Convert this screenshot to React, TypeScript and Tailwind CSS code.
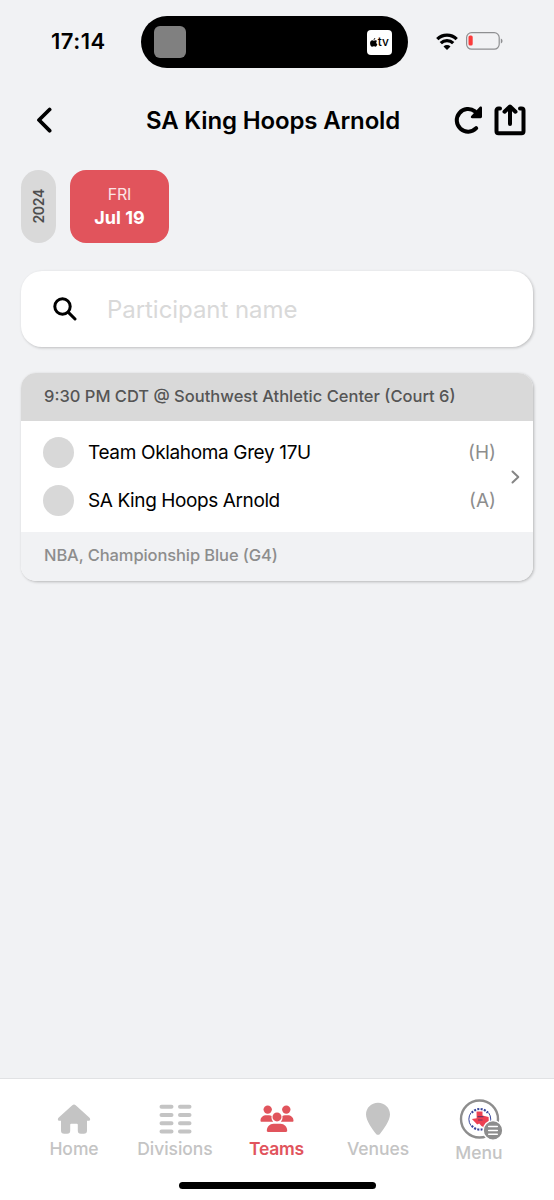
import React from 'react';
import clsx from 'clsx';

interface Team {
  name: string;
  side: string;
  tracking: string;
}

interface TabItem {
  label: string;
  icon: React.ReactNode;
  width: string;
  active?: boolean;
}

const teams: Team[] = [
  { name: 'Team Oklahoma Grey 17U', side: '(H)', tracking: 'tracking-[-0.35px]' },
  { name: 'SA King Hoops Arnold', side: '(A)', tracking: 'tracking-[-0.4px]' },
];

const AppleGlyph = () => (
  <svg viewBox="0 0 14 17" className="h-[9px] w-[7.5px]" fill="#000">
    <path d="M9.900 0c.1 1.900-1.400 3.700-3.200 3.700C6.500 1.900 8.200.2 9.900 0ZM13.200 5.700c-2.400 1.500-2 4.900.6 6-.6 1.900-2.100 4.800-3.800 4.800-1.200 0-1.600-.7-3-.7s-1.900.7-3 .7C1.700 16.500-.2 12.200.1 9 .3 5.900 2.200 4.300 4.100 4.300c1.200 0 2.200.8 3 .8.700 0 2-.9 3.500-.9 1 0 2 .5 2.600 1.500Z" />
  </svg>
);

const WifiIcon = () => (
  <svg viewBox="0 0 22 17" className="h-[17px] w-[22px]" fill="none" stroke="#000">
    <path d="M1.300 6.200a13.800 13.800 0 0 1 19.400 0" strokeWidth="3.3" />
    <path d="M4.800 10.100a8.800 8.800 0 0 1 12.400 0" strokeWidth="3.200" />
    <path d="M11 17 7.500 13.500a4.900 4.900 0 0 1 7 0Z" fill="#000" stroke="none" />
  </svg>
);

const BatteryIcon = () => (
  <svg viewBox="0 0 37 18" className="h-[18px] w-[37px]" fill="none">
    <rect x="0.6" y="0.6" width="32.600" height="16.600" rx="5" stroke="#8e8f91" strokeWidth="1.2" />
    <rect x="2.500" y="3.500" width="4.200" height="10" rx="1.600" fill="#fb3b3b" />
    <path d="M34.800 6.500v5c1.200-.5 1.700-1.400 1.700-2.500s-.5-2-1.700-2.500Z" fill="#8e8f91" />
  </svg>
);

const StatusBar = () => (
  <div className="flex h-20 items-start">
    <div className="w-[141px] pt-[26px] pl-[51px] text-[22px] leading-[30px] font-semibold">
      <span className="tracking-[0.5px]">17:14</span>
    </div>
    <div className="mt-4 flex h-[52px] w-[267px] items-center justify-between rounded-full bg-black pr-4 pl-[13px]">
      <div className="size-8 rounded-[6px] bg-[#808080]" />
      <div className="flex size-[25px] items-center justify-center rounded-[4px] bg-white">
        <AppleGlyph />
        <span className="pb-px text-[12px] leading-none font-medium">tv</span>
      </div>
    </div>
    <div className="flex items-center gap-2 pt-8 pl-[28px]">
      <WifiIcon />
      <BatteryIcon />
    </div>
  </div>
);

const Header = () => (
  <header className="flex h-20 items-center">
    <button className="w-[109px] pl-9" aria-label="Back">
      <svg viewBox="0 0 16 26" className="h-[26px] w-4" fill="none" stroke="#000" strokeWidth="3.8" strokeLinecap="round" strokeLinejoin="round">
        <path d="M13.600 2.500 3 13l10.600 10.700" />
      </svg>
    </button>
    <h1 className="w-[328px] pt-px text-center text-[24px] font-semibold whitespace-nowrap">
      <span className="tracking-[-0.15px]">SA King Hoops Arnold</span>
    </h1>
    <button className="ml-[17px]" aria-label="Refresh">
      <svg viewBox="0 0 28 28" className="size-7" fill="none" stroke="#000" strokeWidth="4" strokeLinecap="round">
        <path d="M22.200 22.200A11.300 11.300 0 1 1 21 5.400" />
        <path d="M28 1.800v9a1.400 1.400 0 0 1-1.400 1.400h-8.400c-1.300 0-1.800-1.400-1-2.200l8.400-9c.9-.9 2.400-.5 2.400.8Z" fill="#000" stroke="none" />
      </svg>
    </button>
    <button className="ml-3" aria-label="Share">
      <svg viewBox="0 0 32 32" className="size-8" fill="none" stroke="#000" strokeWidth="4" strokeLinecap="round" strokeLinejoin="round">
        <path d="M6 4.500H4.500c-1.300 0-2 .8-2 2v20.700c0 1.200.7 2 2 2h23c1.300 0 2-.8 2-2V6.500c0-1.200-.7-2-2-2H26" />
        <path d="M16 20V3M10.500 7.700 16 2.500l5.500 5.200" />
      </svg>
    </button>
  </header>
);

const DateSelector = () => (
  <div className="flex h-[73px] gap-[14px] px-[21px]">
    <div className="flex w-[35px] items-center justify-center rounded-full bg-[#d9d9d9]">
      <span className="rotate-180 text-[14px] font-semibold tracking-[-0.3px] text-[#4d4d4d] [writing-mode:vertical-rl]">
        2024
      </span>
    </div>
    <button className="flex w-[99px] flex-col items-center justify-center rounded-2xl bg-[#e1545c] pb-px">
      <span className="text-[16px] leading-6 tracking-[-0.2px] text-[#fbe3e5]">FRI</span>
      <span className="text-[18px] leading-6 font-bold text-white">Jul 19</span>
    </button>
  </div>
);

const SearchBox = () => (
  <div className="mx-[21px] mt-7 flex h-[76px] items-center rounded-[21px] bg-white shadow-[1px_1px_3px_rgba(0,0,0,0.22)]">
    <svg viewBox="0 0 24 24" className="ml-8 size-6 shrink-0" fill="none" stroke="#000" strokeWidth="3" strokeLinecap="round">
      <circle cx="9.500" cy="9.500" r="7.700" />
      <path d="m15.400 15.400 6.600 6.600" />
    </svg>
    <input
      type="text"
      placeholder="Participant name"
      className="ml-[30px] w-[380px] bg-transparent pt-[2px] text-[24px] tracking-[-0.05px] outline-none placeholder:text-[#d9d9d9]"
    />
  </div>
);

const GameCard = () => (
  <section className="mx-[21px] mt-[26px] overflow-hidden rounded-[15px] bg-white shadow-[1px_1px_3px_rgba(0,0,0,0.25)]">
    <div className="flex h-12 items-center bg-[#d9d9d9] pb-px pl-[23px] text-[16.5px] font-medium whitespace-nowrap text-[#555]">
      9:30 PM CDT @ Southwest Athletic Center (Court 6)
    </div>
    <div className="flex h-[111px] items-center">
      <div className="flex w-[475px] flex-col pl-[22px]">
        {teams.map((team) => (
          <div key={team.name} className="flex h-12 items-center">
            <div className="size-[31px] rounded-full bg-[#d8d8d8]" />
            <span className={clsx('ml-[14px] flex-1 pt-[2px] text-[19px]', team.tracking)}>{team.name}</span>
            <span className="pt-[2px] text-[19px] text-[#8d8d8d]">{team.side}</span>
          </div>
        ))}
      </div>
      <svg viewBox="0 0 9 14" className="ml-[15px] h-[14px] w-[9px]" fill="none" stroke="#858585" strokeWidth="2" strokeLinecap="round" strokeLinejoin="round">
        <path d="m1.500 1.500 5.800 5.500-5.800 5.500" />
      </svg>
    </div>
    <div className="flex h-[49px] items-center bg-[#f1f2f4] pb-[2px] pl-[23px] text-[16.5px] font-medium text-[#8d8d8d]">
      <span className="tracking-[-0.1px]">NBA, Championship Blue (G4)</span>
    </div>
  </section>
);

const HomeIcon = () => (
  <svg viewBox="0 0 34 30" className="h-[30px] w-[34px]" fill="#c4c4c4">
    <path d="M15.300 1.300a2.600 2.600 0 0 1 3.400 0l13.800 12.400c1.200 1.100.7 3.100-1 3.100H30v9.700a3.200 3.200 0 0 1-3.200 3.200h-3a3 3 0 0 1-3-3v-5.900a1 1 0 0 0-1-1h-5.600a1 1 0 0 0-1 1v5.900a3 3 0 0 1-3 3h-3A3.200 3.200 0 0 1 4 26.500v-9.700H2.500c-1.700 0-2.200-2-1-3.100Z" />
  </svg>
);

const DivisionsIcon = () => (
  <svg viewBox="0 0 34 30" className="h-[30px] w-[34px]" stroke="#c4c4c4" strokeWidth="4" strokeLinecap="round">
    <path d="M3.500 2.800h10M22 2.800h9.500M3.500 11h10M22 11h9.500M3.500 19.200h10M22 19.200h9.500M3.500 27.400h10M22 27.400h9.500" />
  </svg>
);

const TeamsIcon = () => (
  <svg viewBox="0 0 34 28" className="h-[28px] w-[34px]" fill="#e1545c">
    <circle cx="7.700" cy="4.600" r="4.200" />
    <circle cx="26.300" cy="4.600" r="4.200" />
    <path d="M1.500 16.700c-.6 0-1-.4-1-1 0-3.400 2.700-5.400 5.800-5.400h2.800c1 0 1.700.2 2.500.6-.4 2.200.2 4.300 1.600 5.800ZM32.500 16.700c.6 0 1-.4 1-1 0-3.400-2.700-5.400-5.800-5.400h-2.800c-1 0-1.700.2-2.500.6.400 2.200-.2 4.300-1.600 5.800Z" />
    <circle cx="17" cy="11.900" r="4.500" />
    <path d="M8 27c-.8 0-1.200-.5-1.200-1.200 0-4 3-7 6.700-7h7c3.700 0 6.700 3 6.700 7 0 .7-.4 1.200-1.200 1.200Z" />
  </svg>
);

const PinIcon = () => (
  <svg viewBox="0 0 26 34" className="h-[34px] w-[26px]" fill="#c4c4c4">
    <path d="M13 .7C6.200.7 1 5.800 1 12.500c0 6 6.300 14.700 10.100 19.400a2.400 2.400 0 0 0 3.800 0C18.700 27.200 25 18.500 25 12.500 25 5.800 19.800.7 13 .7Z" />
  </svg>
);

const MenuIcon = () => (
  <svg viewBox="0 0 44 44" className="h-[44px] w-[44px]" fill="none">
    <circle cx="20.500" cy="21" r="18.500" stroke="#8d8d8d" strokeWidth="2.4" />
    <path d="M12 14.700a11 11 0 0 0 0 13M29.600 14.700a11 11 0 0 1 0 13" stroke="#35439a" strokeWidth="1" />
    <path d="M12.800 14.800a10.300 10.300 0 0 1 16 0M12.800 27.800a10.300 10.300 0 0 0 16 0" stroke="#35439a" strokeWidth="2.2" strokeDasharray="2 1.300" />
    <path d="M17.500 13.500h6v4l6.100 1.500.2 5.100-3.300 2.300-1.300 3-2.800-1.400-2.200-2.500-2 .9-5.300-5.400 4.800-.8Z" fill="#ed4052" />
    <path d="M18.500 18.700h6M19 22h4.500" stroke="#763361" strokeWidth="1.2" />
    <circle cx="34" cy="32.400" r="9.800" fill="#8d8d8d" stroke="#fff" strokeWidth="1.4" />
    <path d="M29.700 28.600h8.600M29.700 32.400h8.600M29.700 36.200h8.600" stroke="#fff" strokeWidth="1.5" strokeLinecap="round" />
  </svg>
);

const tabs: TabItem[] = [
  { label: 'Home', icon: <HomeIcon />, width: 'w-[101px]' },
  { label: 'Divisions', icon: <DivisionsIcon />, width: 'w-[101px]' },
  { label: 'Teams', icon: <TeamsIcon />, width: 'w-[102px]', active: true },
  { label: 'Venues', icon: <PinIcon />, width: 'w-[101px]' },
];

const TabBar = () => (
  <footer className="h-[122px] border-t border-[#e1e2e4] bg-white">
    <nav className="flex h-[103px] items-start pl-[23.5px]">
      {tabs.map((tab) => (
        <button key={tab.label} className={clsx('flex flex-col items-center pt-[22px]', tab.width)}>
          <span className="flex h-[35px] items-center">{tab.icon}</span>
          <span
            className={clsx(
              'mt-px text-[17.5px] leading-6',
              tab.active
                ? 'font-semibold tracking-[-0.25px] text-[#e1545c]'
                : 'font-medium tracking-[-0.05px] text-[#c4c4c4]',
            )}
          >
            {tab.label}
          </span>
        </button>
      ))}
      <button className="flex w-[101px] flex-col items-center pt-[19px]">
        <span className="pl-1">
          <MenuIcon />
        </span>
        <span className="-mt-px text-[17.5px] leading-6 font-medium text-[#c4c4c4]">Menu</span>
      </button>
    </nav>
    <div className="mx-auto h-[7px] w-[197px] rounded-full bg-black" />
  </footer>
);

const App = () => {
  return (
    <div className="flex h-[1200px] w-[554px] flex-col overflow-hidden bg-[#f1f2f4] font-['Inter','Liberation_Sans',sans-serif] text-black">
      <StatusBar />
      <Header />
      <main className="flex-1 pt-[10px]">
        <DateSelector />
        <SearchBox />
        <GameCard />
      </main>
      <TabBar />
    </div>
  );
};

export default App;
